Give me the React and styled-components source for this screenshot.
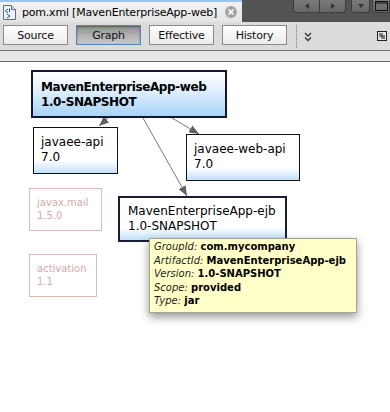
import React from "react";
import styled, { createGlobalStyle, css } from "styled-components";

const Global = createGlobalStyle`
  html, body { margin: 0; padding: 0; background: #fff; }
  body { font-family: "DejaVu Sans", "Noto Sans", sans-serif; }
  * { box-sizing: border-box; }
`;

const Page = styled.div`
  width: 390px;
  height: 412px;
  display: flex;
  flex-direction: column;
  overflow: hidden;
  background: #fff;
`;

const TabBar = styled.div`
  height: 22px;
  display: flex;
  flex: none;
`;

const Tab = styled.div`
  width: 242px;
  display: flex;
  align-items: center;
  padding-left: 3px;
  border-top: 2px solid #9cc2ee;
  background: linear-gradient(#f2f2f2, #e4e4e4);
`;

const TabTitle = styled.span`
  margin-left: 6px;
  font-size: 11px;
  letter-spacing: -0.2px;
  color: #000;
  white-space: nowrap;
`;

const CloseButton = styled.span`
  margin-left: auto;
  margin-right: 5px;
  width: 12px;
  height: 12px;
  border-radius: 50%;
  background: #a3a3a3;
  display: flex;
  align-items: center;
  justify-content: center;
`;

const TabStrip = styled.div`
  flex: 1;
  background: #535353;
  display: flex;
  justify-content: flex-end;
  align-items: flex-start;
  gap: 2px;
`;

const NavGroup = styled.div`
  display: flex;
  margin-right: 3px;
`;

const StripButton = styled.div`
  width: ${(p) => p.$w}px;
  height: 13px;
  background: linear-gradient(#7b7b7b, #666);
  border: 1px solid #3c3c3c;
  border-top: none;
  border-left-width: ${(p) => (p.$joined ? 0 : 1)}px;
  border-radius: ${(p) => p.$radius || "0"};
  display: flex;
  align-items: center;
  justify-content: center;
`;

const Toolbar = styled.div`
  height: 29px;
  flex: none;
  display: flex;
  align-items: flex-start;
  padding: 3px 2px 0 3px;
  background: #dcdcdc;
  border-bottom: 1px solid #737373;
`;

const ToggleButton = styled.div`
  width: 65px;
  height: 20px;
  margin-right: 8px;
  display: flex;
  align-items: center;
  justify-content: center;
  font-size: 11px;
  letter-spacing: -0.2px;
  color: #111;
  border: 1px solid #8a8a8a;
  background: linear-gradient(#ffffff, #ebebeb);
  ${(p) =>
    p.$active &&
    css`
      border-color: #5b80b6;
      background: linear-gradient(#8d8d8d, #b3b3b3 55%, #c9c9c9);
      box-shadow: inset 0 1px 2px rgba(0, 0, 0, 0.35);
    `}
`;

const Separator = styled.div`
  width: 0;
  height: 23px;
  margin-left: 1px;
  border-left: 1px dotted #7a7a7a;
`;

const ChevronSlot = styled.div`
  margin-left: 7px;
  margin-top: 7px;
  display: flex;
`;

const CornerSlot = styled.div`
  margin-left: auto;
  margin-top: 6px;
  margin-right: 1px;
  display: flex;
`;

const SubBar = styled.div`
  height: 11px;
  flex: none;
  background: #e7e7e7;
  border-bottom: 1px solid #6b6b6b;
`;

const Canvas = styled.div`
  position: relative;
  flex: 1;
  background: #fff;
`;

const Edges = styled.svg`
  position: absolute;
  left: 0;
  top: 0;
  width: 390px;
  height: 350px;
  overflow: visible;
`;

const toneStyles = {
  root: css`
    border: 2px solid #15172e;
    background: linear-gradient(#ffffff, #dceefd 45%, #a8d3f7);
    font-weight: bold;
    letter-spacing: -0.4px;
    padding: 8px 8px 6px 8px;
  `,
  normal: css`
    border: 1px solid #111;
    background: linear-gradient(#ffffff 0%, #ffffff 72%, #c2e0fa 100%);
    padding: 7px 7px 7px 7px;
  `,
  hover: css`
    border: 2px solid #1a1c34;
    background: linear-gradient(#ffffff 0%, #ffffff 70%, #c2e0fa 100%);
    padding: 6px 8px 6px 8px;
  `,
  muted: css`
    border: 1px solid #dcb8b8;
    background: #fff;
    color: #d2abab;
    font-size: 10px;
    line-height: 12.5px;
    padding: 8px 7px;
  `,
};

const Node = styled.div`
  position: absolute;
  left: ${(p) => p.$x}px;
  top: ${(p) => p.$y}px;
  width: ${(p) => p.$w}px;
  height: ${(p) => p.$h}px;
  font-size: 12px;
  line-height: 14.5px;
  color: #000;
  white-space: nowrap;
  ${(p) => toneStyles[p.$tone]}
`;

const NodeLine = styled.div``;

const Tooltip = styled.div`
  position: absolute;
  left: 149px;
  top: 176px;
  width: 208px;
  height: 75px;
  padding: 1px 4px 5px 4px;
  background: #ffffc7;
  border: 1px solid #a2a294;
  box-shadow: 0 4px 9px rgba(0, 0, 0, 0.42);
  font-size: 10px;
  line-height: 13.5px;
  color: #000;
  white-space: nowrap;
`;

const TipRow = styled.div``;

const TipLabel = styled.span`
  font-style: italic;
  color: #1e1e1e;
`;

const TipValue = styled.span`
  font-weight: bold;
`;

const FileIcon = () => (
  <svg width="13" height="15" viewBox="0 0 13 15">
    <path d="M0.5 0.5 H8.5 L12.5 4.5 V14.5 H0.5 Z" fill="#eef4fb" stroke="#5a6f88" />
    <path d="M8.5 0.5 V4.5 H12.5" fill="#cfdcec" stroke="#5a6f88" />
    <path d="M5 4 L2.5 6 L5 8" fill="none" stroke="#2a4c7a" strokeWidth="1" />
    <path d="M4 9 L7 11 L4 13" fill="none" stroke="#2a4c7a" strokeWidth="1" />
    <path d="M6.5 3.5 V7" stroke="#2a4c7a" strokeWidth="1" />
  </svg>
);

const CloseGlyph = () => (
  <svg width="6" height="6" viewBox="0 0 6 6">
    <path d="M0.5 0.5 L5.5 5.5 M5.5 0.5 L0.5 5.5" stroke="#fff" strokeWidth="1.5" />
  </svg>
);

const Tri = ({ dir }) => {
  const d =
    dir === "left"
      ? "M4 0 L0 3 L4 6 Z"
      : dir === "right"
      ? "M0 0 L4 3 L0 6 Z"
      : "M0 0 L6 0 L3 4 Z";
  const w = dir === "down" ? 6 : 4;
  const h = dir === "down" ? 4 : 6;
  return (
    <svg width={w} height={h} viewBox={`0 0 ${w} ${h}`}>
      <path d={d} fill="#333" />
    </svg>
  );
};

const MaxGlyph = () => (
  <svg width="13" height="10" viewBox="0 0 13 10">
    <rect x="0.5" y="0.5" width="12" height="9" fill="none" stroke="#111" />
    <path d="M1 2 H12" stroke="#111" />
  </svg>
);

const Chevrons = () => (
  <svg width="8" height="10" viewBox="0 0 8 10">
    <path d="M1 1 L4 4 L7 1 M1 5.5 L4 8.5 L7 5.5" fill="none" stroke="#333" strokeWidth="1.3" />
  </svg>
);

const CornerIcon = () => (
  <svg width="10" height="10" viewBox="0 0 10 10">
    <rect x="0.5" y="0.5" width="9" height="9" fill="#e6e6e6" stroke="#222" />
    <path d="M5 2 V8 M2 5 H8" stroke="#222" />
    <rect x="2" y="2" width="2" height="2" fill="#777" />
    <rect x="6" y="6" width="2" height="2" fill="#777" />
  </svg>
);

const nodes = [
  { id: "web", tone: "root", x: 31, y: 8, w: 196, h: 48, lines: ["MavenEnterpriseApp-web", "1.0-SNAPSHOT"] },
  { id: "api", tone: "normal", x: 33, y: 65, w: 85, h: 47, lines: ["javaee-api", "7.0"] },
  { id: "webapi", tone: "normal", x: 186, y: 72, w: 114, h: 47, lines: ["javaee-web-api", "7.0"] },
  { id: "mail", tone: "muted", x: 29, y: 126, w: 73, h: 43, lines: ["javax.mail", "1.5.0"] },
  { id: "act", tone: "muted", x: 29, y: 192, w: 68, h: 43, lines: ["activation", "1.1"] },
  { id: "ejb", tone: "hover", x: 118, y: 134, w: 169, h: 46, lines: ["MavenEnterpriseApp-ejb", "1.0-SNAPSHOT"] },
];

const edges = [
  [108, 56, 99, 64],
  [172, 56, 199, 72],
  [143, 56, 187, 134],
];

const tipRows = [
  ["GroupId:", "com.mycompany"],
  ["ArtifactId:", "MavenEnterpriseApp-ejb"],
  ["Version:", "1.0-SNAPSHOT"],
  ["Scope:", "provided"],
  ["Type:", "jar"],
];

const buttons = ["Source", "Graph", "Effective", "History"];

export default function App() {
  return (
    <Page>
      <Global />
      <TabBar>
        <Tab>
          <FileIcon />
          <TabTitle>pom.xml [MavenEnterpriseApp-web]</TabTitle>
          <CloseButton>
            <CloseGlyph />
          </CloseButton>
        </Tab>
        <TabStrip>
          <NavGroup>
            <StripButton $w={27} $radius="0 0 0 3px">
              <Tri dir="left" />
            </StripButton>
            <StripButton $w={26} $joined $radius="0 0 3px 0">
              <Tri dir="right" />
            </StripButton>
          </NavGroup>
          <StripButton $w={19} $radius="0 0 3px 3px">
            <Tri dir="down" />
          </StripButton>
          <StripButton $w={18} $radius="0 0 0 3px">
            <MaxGlyph />
          </StripButton>
        </TabStrip>
      </TabBar>
      <Toolbar>
        {buttons.map((b) => (
          <ToggleButton key={b} $active={b === "Graph"}>
            {b}
          </ToggleButton>
        ))}
        <Separator />
        <ChevronSlot>
          <Chevrons />
        </ChevronSlot>
        <CornerSlot>
          <CornerIcon />
        </CornerSlot>
      </Toolbar>
      <SubBar />
      <Canvas>
        <Edges viewBox="0 0 390 350">
          <defs>
            <marker
              id="arrow"
              markerUnits="userSpaceOnUse"
              markerWidth="10"
              markerHeight="8"
              refX="10"
              refY="4"
              orient="auto"
            >
              <path d="M0 0 L10 4 L0 8 Z" fill="#5f5f5f" />
            </marker>
          </defs>
          {edges.map(([x1, y1, x2, y2], i) => (
            <line
              key={i}
              x1={x1}
              y1={y1}
              x2={x2}
              y2={y2}
              stroke="#7a7a7a"
              strokeWidth="1"
              markerEnd="url(#arrow)"
            />
          ))}
        </Edges>
        {nodes.map((n) => (
          <Node key={n.id} $tone={n.tone} $x={n.x} $y={n.y} $w={n.w} $h={n.h}>
            {n.lines.map((l) => (
              <NodeLine key={l}>{l}</NodeLine>
            ))}
          </Node>
        ))}
        <Tooltip>
          {tipRows.map(([k, v]) => (
            <TipRow key={k}>
              <TipLabel>{k}</TipLabel> <TipValue>{v}</TipValue>
            </TipRow>
          ))}
        </Tooltip>
      </Canvas>
    </Page>
  );
}
